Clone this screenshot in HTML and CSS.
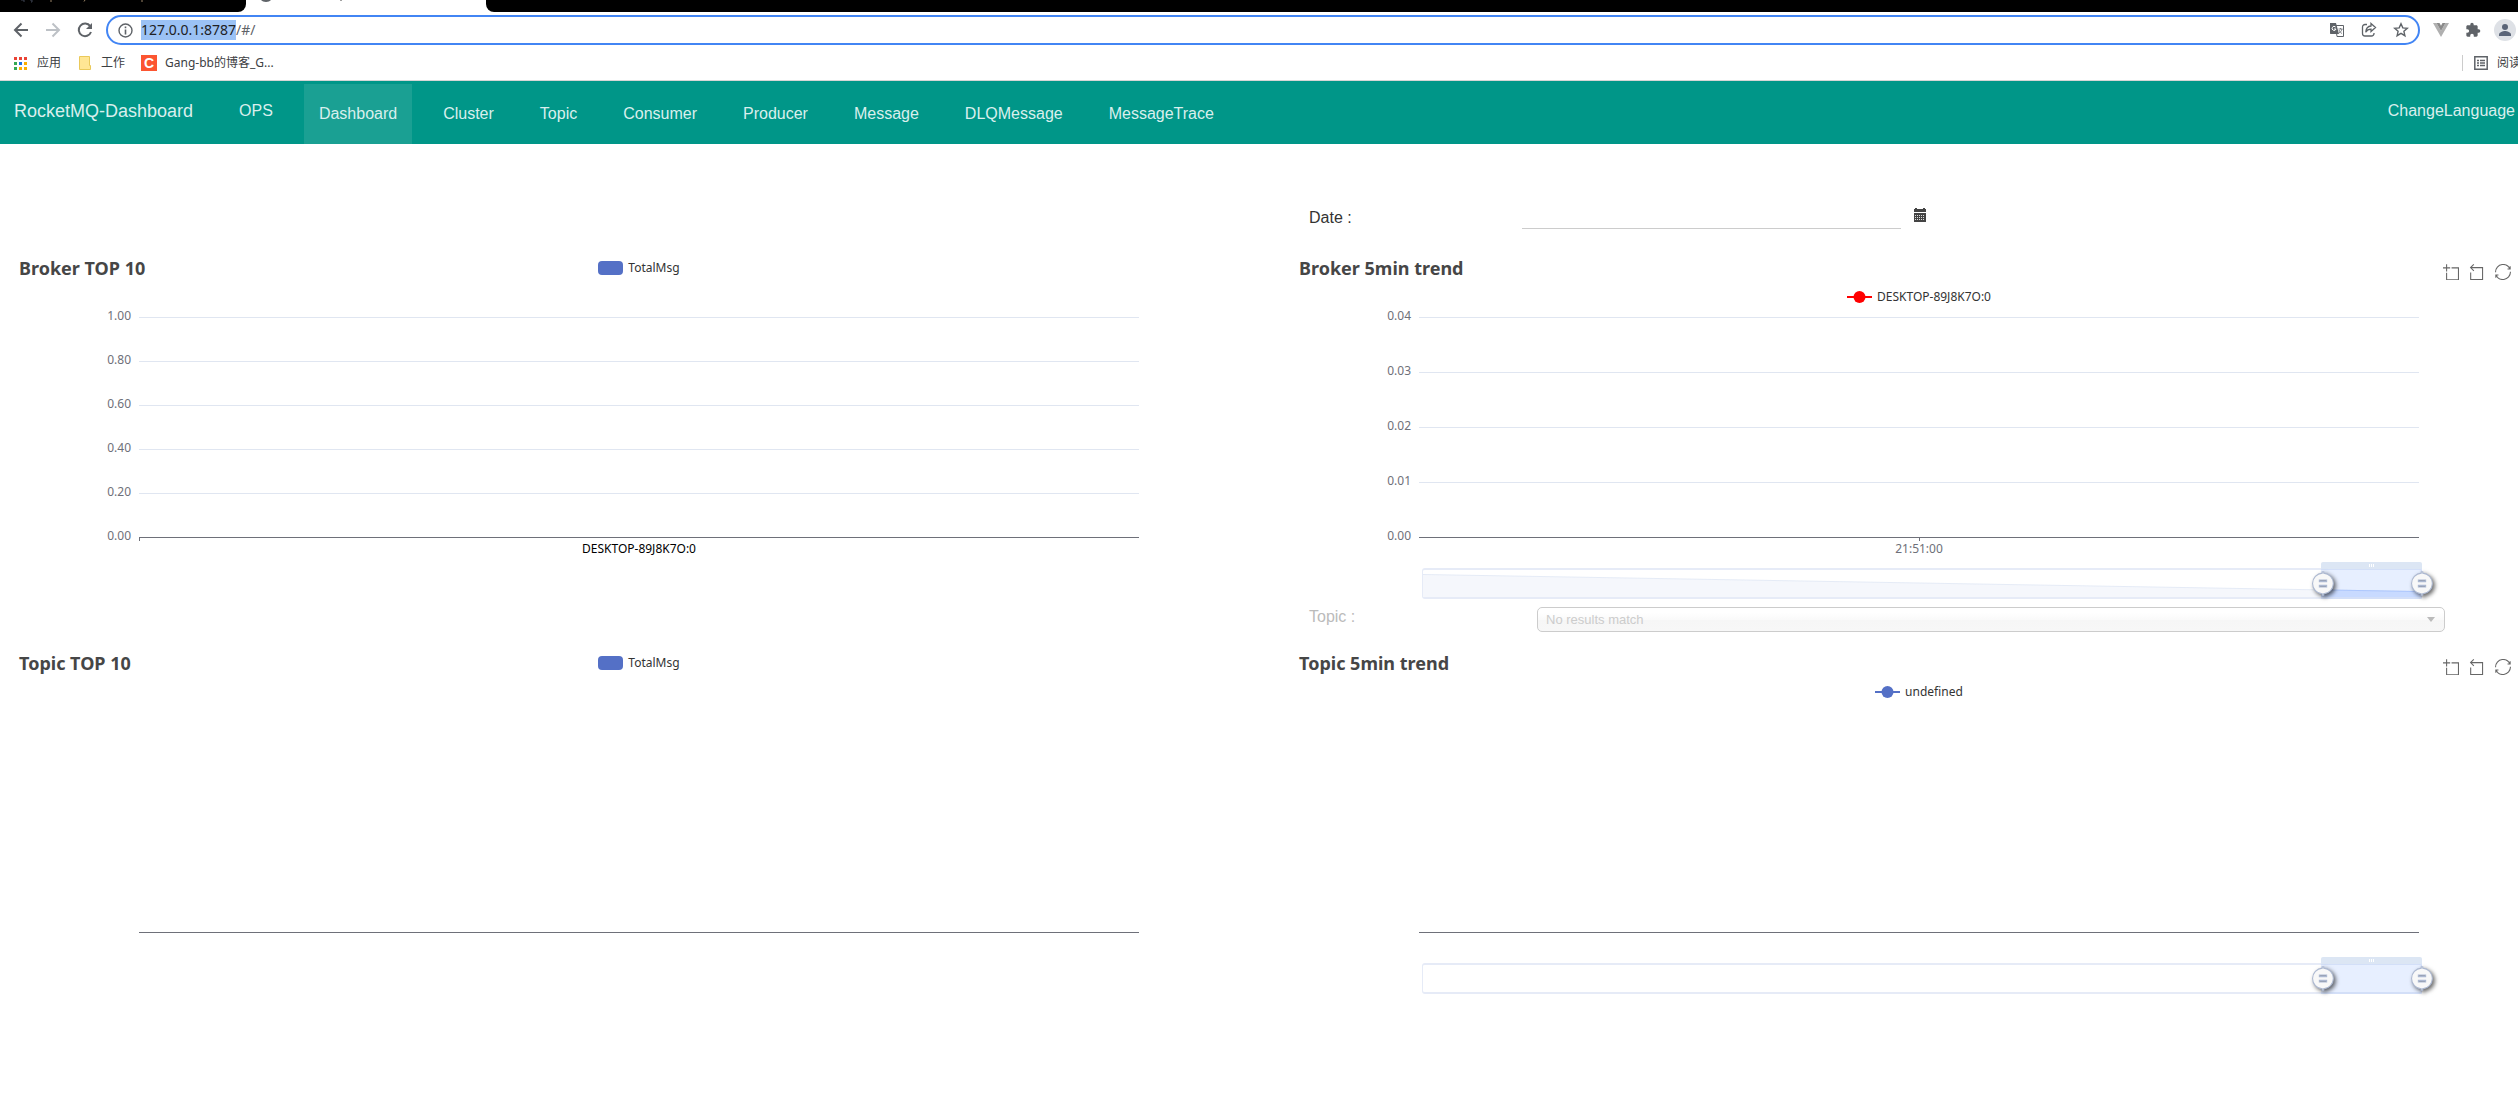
FILE: index.html
```html
<!DOCTYPE html>
<html lang="en">
<head>
<meta charset="utf-8">
<title>RocketMQ-Dashboard</title>
<link rel="stylesheet" href="styles.css">
</head>
<body>
<svg class="sprite" aria-hidden="true">
  <symbol id="tool-zoom" viewBox="0 -1 60 60"><path d="M0,13.5h26.9 M13.5,26.9V0 M32.1,13.5H58V58H13.5 V32.1"/></symbol>
  <symbol id="tool-back" viewBox="4 0 60 60"><path d="M22,1.4L9.9,13.5l12.3,12.3 M10.3,13.5H54.9v44.6 H10.3v-26"/></symbol>
  <symbol id="tool-restore" viewBox="0 0 60 60"><path d="M47,18.9h9.8V8.7 M56.3,20.1 C52.1,9,40.5,0.6,26.8,2.1C12.6,3.7,1.6,16.2,2.1,30.6 M13,41.1H3.1v10.2 M3.7,39.9c4.2,11.1,15.8,19.5,29.5,18 c14.2-1.6,25.2-14.1,24.7-28.5"/></symbol>
  <symbol id="handle" viewBox="0 10 20 22.6"><path d="M10.7,11.9v-1.3H9.3v1.3c-4.9,0.3-8.8,4.4-8.8,9.4c0,5,3.9,9.1,8.8,9.4v1.3h1.3v-1.3c4.9-0.3,8.8-4.4,8.8-9.4C19.5,16.3,15.6,12.2,10.7,11.9z M13.3,24.4H6.7V23h6.6V24.4z M13.3,19.6H6.7v-1.4h6.6V19.6z"/></symbol>
</svg>

<div class="browser">
  <div class="tabstrip">
    <div class="tab-dark tab-first"><svg width="160" height="3" viewBox="0 0 160 3"><path d="M21 0h3v2M30 0h2v2h-1" fill="none" stroke="#3c4350"/><path d="M51 0v2M85 0l-1 1.500M142 0v2" stroke="#9a8468"/></svg></div>
    <div class="tab-active"><svg width="110" height="3" viewBox="0 0 110 3"><path d="M15 0h10c-2 2.600-8 2.600-10 0z" fill="#5f6368"/><path d="M95 0v1" stroke="#444"/></svg></div>
    <div class="tab-dark tab-rest"></div>
  </div>
  <div class="toolbar">
    <button class="tool" aria-label="Back"><svg width="16" height="16" viewBox="0 0 16 16" fill="none" stroke="#5f6368" stroke-width="2"><path d="M15 8H2M8.500 1.500L2 8l6.500 6.500"/></svg></button>
    <button class="tool" aria-label="Forward"><svg width="16" height="16" viewBox="0 0 16 16" fill="none" stroke="#bdc1c6" stroke-width="2"><path d="M1 8h13M7.500 1.500L14 8l-6.500 6.500"/></svg></button>
    <button class="tool" aria-label="Reload"><svg width="16" height="16" viewBox="0 0 16 16"><path d="M13.200 4.200A6.300 6.300 0 1 0 14 10" fill="none" stroke="#5f6368" stroke-width="2"/><path d="M15 1v6H9z" fill="#5f6368"/></svg></button>
    <div class="omnibox">
      <svg width="15" height="15" viewBox="0 0 15 15"><circle cx="7.500" cy="7.500" r="6.500" fill="none" stroke="#5f6368" stroke-width="1.400"/><path d="M7.500 6.500v5M7.500 3.500v1.700" stroke="#5f6368" stroke-width="1.600"/></svg>
      <p class="url"><mark>127.0.0.1:8787</mark>/#/</p>
      <div class="omni-actions">
        <svg width="16" height="16" viewBox="0 0 16 16"><path d="M6.500 3.500h8v11H8z" fill="#fff" stroke="#5f6368"/><path d="M1 1h6l3 11H1.500L1 11.500z" fill="#5f6368"/><path d="M6.500 5A2 2 0 1 0 7 7H5" fill="none" stroke="#fff"/><path d="M9.500 7h4M11.500 6v1M13 7c-.5 2-1.500 3-3 4M10 8c.8 2 2 3 3 3.500" fill="none" stroke="#5f6368" stroke-width=".8"/></svg>
        <svg width="16" height="16" viewBox="0 0 16 16" fill="none" stroke="#5f6368" stroke-width="1.300"><path d="M6 2.500H4a2.500 2.500 0 0 0-2.500 2.500v6.500A2.500 2.500 0 0 0 4 14h6.500a2.500 2.500 0 0 0 2.500-2.500V11"/><path d="M10 1.500L14.500 5.500l-4.500 4V7.200C7.500 7.200 6 8 4.700 10.200 5 6.500 7 4.200 10 4z"/></svg>
        <svg width="16" height="16" viewBox="0 0 16 16"><path d="M8 1.800l1.800 4.100 4.500.4-3.400 3 1 4.400L8 11.400l-3.900 2.300 1-4.400-3.400-3 4.500-.4z" fill="none" stroke="#5f6368" stroke-width="1.400"/></svg>
      </div>
    </div>
    <div class="extensions">
      <svg width="16" height="14" viewBox="0 0 16 14"><path d="M0 0h3.500L8 8l4.500-8H16L8 14z" fill="#b0b0b0"/><path d="M3.500 0h3L8 2.700 9.500 0h3L8 8z" fill="#8a8a8a"/></svg>
      <svg width="16" height="16" viewBox="0 0 24 24"><path d="M20.500 11H19V7c0-1.100-.9-2-2-2h-4V3.500a2.500 2.500 0 0 0-5 0V5H4c-1.100 0-2 .9-2 2v3.800h1.500a2.700 2.700 0 0 1 0 5.400H2V20c0 1.100.9 2 2 2h3.800v-1.500a2.700 2.700 0 0 1 5.400 0V22H17c1.100 0 2-.9 2-2v-4h1.500a2.500 2.500 0 0 0 0-5z" fill="#5f6368"/></svg>
      <svg width="22" height="22" viewBox="0 0 22 22"><circle cx="11" cy="11" r="11" fill="#dee1e6"/><circle cx="11" cy="8" r="3" fill="#5a6478"/><path d="M5 17v-1.500c0-2.300 4-3.500 6-3.500s6 1.200 6 3.500V17z" fill="#5a6478"/></svg>
    </div>
  </div>
  <div class="bookmarks">
    <a class="bookmark" href="#"><svg width="13" height="13" viewBox="0 0 13 13"><path d="M0 0h3v3H0zM5 0h3v3H5zM10 0h3v3h-3z" fill="#ea4335"/><path d="M0 5h3v3H0zM0 10h3v3H0z" fill="#34a853"/><path d="M5 5h3v3H5z" fill="#1a73e8"/><path d="M10 5h3v3h-3zM5 10h3v3H5zM10 10h3v3h-3z" fill="#fbaf00"/></svg>应用</a>
    <a class="bookmark" href="#"><svg width="12" height="14" viewBox="0 0 12 14"><path d="M.5.5h10v9h1v4H.5z" fill="#ffe694" stroke="#eac95a"/></svg>工作</a>
    <a class="bookmark blog" href="#"><span class="csdn">C</span>Gang-bb的博客_G...</a>
    <a class="bookmark reading" href="#"><svg width="14" height="14" viewBox="0 0 14 14"><path d="M.8.8h12.400v12.400H.8z" fill="none" stroke="#5f6368" stroke-width="1.500"/><path d="M3 4.500h2M6 4.500h5M3 7h2M6 7h5M3 9.500h2M6 9.500h5" stroke="#5f6368" stroke-width="1.400"/></svg>阅读</a>
  </div>
</div>

<header class="navbar">
  <a class="brand" href="#">RocketMQ-Dashboard</a>
  <a class="ops" href="#">OPS</a>
  <nav class="menu">
    <a class="active" href="#">Dashboard</a>
    <a href="#">Cluster</a>
    <a href="#">Topic</a>
    <a href="#">Consumer</a>
    <a href="#">Producer</a>
    <a href="#">Message</a>
    <a href="#">DLQMessage</a>
    <a href="#">MessageTrace</a>
  </nav>
  <a class="language" href="#">ChangeLanguage</a>
</header>

<main class="dashboard">
  <form class="field date-field">
    <label for="date">Date :</label>
    <input id="date" type="text">
    <svg class="calendar" width="14" height="14" viewBox="0 0 14 14"><path d="M1 1h1V0h2v1h6V0h2v1h1v3H1zM1 5h12v9H1z" fill="#444"/><path d="M2 7.500h10M2 9.500h10M2 11.500h10" stroke="#ddd" stroke-dasharray="1 1"/></svg>
  </form>

  <section class="chart broker-top">
    <div class="chart-head">
      <h2>Broker TOP 10</h2>
      <p class="legend"><span class="swatch"></span>TotalMsg</p>
    </div>
    <div class="plot">
      <div class="band"><span>1.00</span></div>
      <div class="band"><span>0.80</span></div>
      <div class="band"><span>0.60</span></div>
      <div class="band"><span>0.40</span></div>
      <div class="band"><span>0.20</span></div>
      <div class="axis tick-start"><span>0.00</span></div>
    </div>
    <p class="category dark">DESKTOP-89J8K7O:0</p>
  </section>

  <section class="chart broker-trend">
    <div class="chart-head">
      <h2>Broker 5min trend</h2>
      <p class="legend low"><svg width="25" height="14" viewBox="0 0 25 14"><path d="M0 7h25" stroke="red" stroke-width="2"/><circle cx="12.500" cy="7" r="6" fill="red"/></svg>DESKTOP-89J8K7O:0</p>
      <div class="toolbox">
        <button aria-label="Zoom"><svg><use href="#tool-zoom"/></svg></button>
        <button aria-label="Zoom reset"><svg><use href="#tool-back"/></svg></button>
        <button aria-label="Restore"><svg><use href="#tool-restore"/></svg></button>
      </div>
    </div>
    <div class="plot wide">
      <div class="band"><span>0.04</span></div>
      <div class="band"><span>0.03</span></div>
      <div class="band"><span>0.02</span></div>
      <div class="band"><span>0.01</span></div>
      <div class="axis tick-middle"><span>0.00</span></div>
    </div>
    <p class="category">21:51:00</p>
    <div class="range">
      <svg class="shadow" viewBox="0 0 1000 30" preserveAspectRatio="none"><path d="M0 5L1000 24V30H0z" fill="#f5f7fc"/><path d="M0 5L1000 24" stroke="#e4eaf6" fill="none"/><path d="M900 22.100L1000 24V30H900z" fill="#d9e5ff"/><path d="M900 22.100L1000 24" stroke="#b4cbfd" fill="none"/></svg>
      <div class="window">
        <div class="grip"><i></i><i></i><i></i></div>
        <button class="handle start" aria-label="Range start"><svg><use href="#handle"/></svg></button>
        <button class="handle end" aria-label="Range end"><svg><use href="#handle"/></svg></button>
      </div>
    </div>
  </section>

  <form class="field topic-field">
    <label for="topic">Topic :</label>
    <div class="chosen"><select id="topic" disabled><option>No results match</option></select></div>
  </form>

  <section class="chart topic-top">
    <div class="chart-head">
      <h2>Topic TOP 10</h2>
      <p class="legend"><span class="swatch"></span>TotalMsg</p>
    </div>
    <div class="plot empty"><div class="axis"></div></div>
  </section>

  <section class="chart topic-trend">
    <div class="chart-head">
      <h2>Topic 5min trend</h2>
      <p class="legend low"><svg width="25" height="14" viewBox="0 0 25 14"><path d="M0 7h25" stroke="#5470c6" stroke-width="2"/><circle cx="12.500" cy="7" r="6" fill="#5470c6"/></svg>undefined</p>
      <div class="toolbox">
        <button aria-label="Zoom"><svg><use href="#tool-zoom"/></svg></button>
        <button aria-label="Zoom reset"><svg><use href="#tool-back"/></svg></button>
        <button aria-label="Restore"><svg><use href="#tool-restore"/></svg></button>
      </div>
    </div>
    <div class="plot empty"><div class="axis"></div></div>
    <div class="range">
      <div class="window">
        <div class="grip"><i></i><i></i><i></i></div>
        <button class="handle start" aria-label="Range start"><svg><use href="#handle"/></svg></button>
        <button class="handle end" aria-label="Range end"><svg><use href="#handle"/></svg></button>
      </div>
    </div>
  </section>
</main>
</body>
</html>
```
FILE: styles.css
```css
* { box-sizing: border-box; }

body {
  margin: 0;
  background: #fff;
  font-family: "Liberation Sans", Arial, sans-serif;
  overflow-x: hidden;
}

h2, p { margin: 0; font-weight: inherit; }
a { color: inherit; text-decoration: none; }
button { padding: 0; border: 0; background: none; display: block; }
svg { display: block; flex: none; }
.sprite { position: absolute; width: 0; height: 0; }

/* Browser window */
.browser {
  font-family: "Noto Sans", "Noto Sans CJK SC", sans-serif;
  border-bottom: 1px solid #d6d6d6;
}
.tabstrip { display: flex; height: 12px; background: #fff; }
.tab-dark { background: #000; }
.tab-first { width: 246px; border-bottom-right-radius: 8px; }
.tab-active { width: 240px; }
.tab-rest { flex: 1; border-bottom-left-radius: 8px; }

.toolbar { display: flex; align-items: center; height: 36px; padding: 0 2px 0 13px; }
.tool { width: 16px; margin-right: 16px; }
.omnibox {
  flex: 1;
  display: flex;
  align-items: center;
  gap: 8px;
  height: 30px;
  margin-left: -3px;
  padding: 0 9px 0 10px;
  border: 2px solid #4285f4;
  border-radius: 15px;
}
.url { flex: 1; font-size: 14px; line-height: 20px; color: #5f6368; }
.url mark { background: #9bc2f5; color: #202124; display: inline-block; }
.omni-actions { display: flex; gap: 16px; }
.extensions { display: flex; align-items: center; gap: 16px; margin-left: 13px; }
.extensions svg:last-child { margin-left: -3px; }

.bookmarks {
  display: flex;
  align-items: center;
  height: 32px;
  padding: 0 0 2px 14px;
  gap: 16px;
  font-size: 12px;
  line-height: 16px;
  color: #3c4043;
  overflow: hidden;
}
.bookmark { display: flex; align-items: center; gap: 10px; white-space: nowrap; }
.bookmark:first-child { margin-right: 2px; }
.blog { gap: 8px; }
.csdn {
  width: 16px;
  background: #fc5531;
  color: #fff;
  font: bold 14px/16px "Liberation Sans", sans-serif;
  text-align: center;
}
.reading {
  width: 56px;
  margin-left: auto;
  padding-left: 11px;
  gap: 9px;
  border-left: 1px solid #ccc;
}

/* Application header */
.navbar {
  display: flex;
  height: 63px;
  padding: 0 3px 0 14px;
  background: #009688;
  color: #d9efed;
  font-size: 16px;
  line-height: 60px;
}
.brand { font-size: 18px; }
.ops { margin-left: 46px; }
.menu { display: flex; gap: 16px; margin: 3px 0 0 31px; }
.menu a { padding: 0 15px; }
.menu .active { background: #1aa093; }
.language { margin-left: auto; }

/* Dashboard */
.dashboard {
  display: grid;
  grid-template-columns: 1fr 1fr;
  grid-template-areas:
    ".          date"
    "broker-top broker-trend"
    ".          topic"
    "topic-top  topic-trend";
  column-gap: 30px;
  margin-right: -26px;
  padding: 58px 0 0 14px;
}
.date-field { grid-area: date; }
.topic-field { grid-area: topic; }
.broker-top { grid-area: broker-top; }
.broker-trend { grid-area: broker-trend; }
.topic-top { grid-area: topic-top; }
.topic-trend { grid-area: topic-trend; }

.field { display: flex; padding-left: 15px; font-size: 16px; color: #333; }
.date-field { height: 55px; padding-top: 3px; line-height: 25px; }
.date-field label { width: 213px; }
.date-field input {
  width: 379px;
  height: 24px;
  border: 0;
  border-bottom: 1px solid #ccc;
  background: none;
}
.calendar { margin: 3px 0 0 12px; }
.topic-field { height: 45px; color: #bbb; line-height: 20px; }
.topic-field label { width: 228px; }
.chosen { position: relative; flex: 1; max-width: 908px; }
.chosen select {
  display: block;
  width: 100%;
  height: 25px;
  padding: 0 8px 1px;
  border: 1px solid #ccc;
  border-radius: 5px;
  appearance: none;
  background: linear-gradient(#fff 20%, #fafafa 50%, #f6f6f6 52%, #f7f7f7 100%);
  font: 13px "Liberation Sans", Arial, sans-serif;
  color: #ccc;
  opacity: 1;
}
.chosen::after {
  content: "";
  position: absolute;
  top: 10px;
  right: 10px;
  border: 4px solid transparent;
  border-top: 5px solid #bbb;
  border-bottom: 0;
}

.chart {
  height: 350px;
  font-family: "Noto Sans", sans-serif;
  font-size: 12px;
  line-height: 16px;
  color: #6e7079;
}
.chart-head {
  display: grid;
  grid-template-columns: 1fr auto 1fr;
  align-items: start;
  height: 60px;
  padding-left: 5px;
}
.chart-head h2 { font-size: 18px; font-weight: bold; line-height: 23px; color: #464646; }
.legend { display: flex; align-items: center; gap: 5px; margin-right: 5px; padding-top: 3px; color: #333; }
.legend.low { padding-top: 32px; }
.swatch { width: 25px; height: 14px; border-radius: 4px; background: #5470c6; }
.toolbox { display: flex; justify-content: flex-end; gap: 10px; padding: 7px 33px 0 0; }
.toolbox svg { width: 16px; height: 16px; overflow: visible; fill: none; stroke: #666; stroke-width: 4; }

.plot { width: 80%; margin: 0 auto; }
.band { height: 44px; border-top: 1px solid #e0e6f1; }
.wide .band { height: 55px; }
.band span, .axis span {
  display: block;
  width: 60px;
  margin: -10px 0 0 -68px;
  text-align: right;
}
.axis { height: 4px; border-top: 1px solid #6e7079; }
.empty { padding-top: 220px; }
.tick-start { background: linear-gradient(#6e7079, #6e7079) 0 0 / 1px 4px no-repeat; }
.tick-middle { background: linear-gradient(#6e7079, #6e7079) 50% 0 / 1px 4px no-repeat; }
.category { text-align: center; }
.category.dark { color: #000; }

/* Range slider under the trend charts */
.range {
  position: relative;
  width: 80%;
  height: 31px;
  margin: 11px 0 0 calc(10% + 3px);
  border: solid #e6ebf7;
  border-width: 2px 1px;
  border-radius: 3px;
}
.empty + .range { margin-top: 27px; }
.shadow { width: 100%; height: 100%; }
.window {
  position: absolute;
  inset: -2px -1px -2px 90%;
  background: rgba(135, 175, 255, .2);
}
.grip {
  position: absolute;
  inset: -6px 0 auto;
  display: flex;
  justify-content: center;
  align-items: center;
  gap: 1px;
  height: 7px;
  border-radius: 2px 2px 0 0;
  background: #dce6f4;
}
.grip i { width: 1px; height: 3px; background: #fff; }
.handle { position: absolute; top: 3px; }
.handle.start { left: -9px; }
.handle.end { right: -11px; }
.handle svg {
  width: 22px;
  height: 25px;
  overflow: visible;
  fill: #f8f8f8;
  stroke: #acb8d1;
  filter: drop-shadow(2px 2px 2px rgba(0, 0, 0, .6));
}
```
